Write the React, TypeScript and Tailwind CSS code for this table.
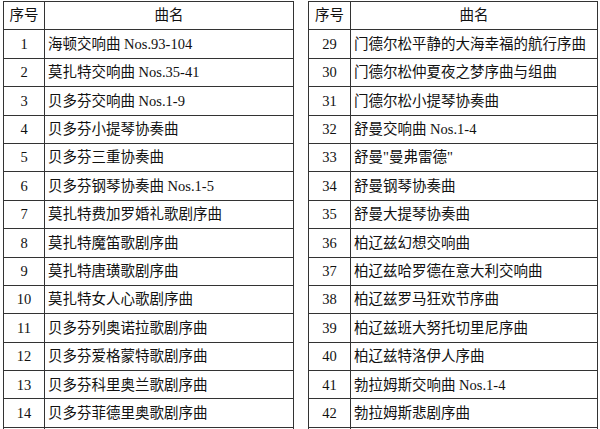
const left: [string, string][] = [
  ['1', '海顿交响曲 Nos.93-104'],
  ['2', '莫扎特交响曲 Nos.35-41'],
  ['3', '贝多芬交响曲 Nos.1-9'],
  ['4', '贝多芬小提琴协奏曲'],
  ['5', '贝多芬三重协奏曲'],
  ['6', '贝多芬钢琴协奏曲 Nos.1-5'],
  ['7', '莫扎特费加罗婚礼歌剧序曲'],
  ['8', '莫扎特魔笛歌剧序曲'],
  ['9', '莫扎特唐璜歌剧序曲'],
  ['10', '莫扎特女人心歌剧序曲'],
  ['11', '贝多芬列奥诺拉歌剧序曲'],
  ['12', '贝多芬爱格蒙特歌剧序曲'],
  ['13', '贝多芬科里奥兰歌剧序曲'],
  ['14', '贝多芬菲德里奥歌剧序曲'],
]

const right: [string, string][] = [
  ['29', '门德尔松平静的大海幸福的航行序曲'],
  ['30', '门德尔松仲夏夜之梦序曲与组曲'],
  ['31', '门德尔松小提琴协奏曲'],
  ['32', '舒曼交响曲 Nos.1-4'],
  ['33', '舒曼"曼弗雷德"'],
  ['34', '舒曼钢琴协奏曲'],
  ['35', '舒曼大提琴协奏曲'],
  ['36', '柏辽兹幻想交响曲'],
  ['37', '柏辽兹哈罗德在意大利交响曲'],
  ['38', '柏辽兹罗马狂欢节序曲'],
  ['39', '柏辽兹班大努托切里尼序曲'],
  ['40', '柏辽兹特洛伊人序曲'],
  ['41', '勃拉姆斯交响曲 Nos.1-4'],
  ['42', '勃拉姆斯悲剧序曲'],
]

function PieceTable({ rows, numWidth, width }: { rows: [string, string][]; numWidth: string; width: string }) {
  return (
    <table className={`table-fixed border-collapse ${width}`}>
      <colgroup>
        <col className={numWidth} />
        <col />
      </colgroup>
      <thead>
        <tr className="h-[28.4px]">
          <th className="border border-[#333] font-normal text-center p-0">序号</th>
          <th className="border border-[#333] font-normal text-center p-0">曲名</th>
        </tr>
      </thead>
      <tbody>
        {rows.map(([no, name]) => (
          <tr key={no} className="h-[28.4px]">
            <td className="border border-[#333] text-center p-0">{no}</td>
            <td className="border border-[#333] text-left pl-[3px] pr-0 py-0 whitespace-nowrap">{name}</td>
          </tr>
        ))}
        {/* next row continues past the bottom edge of the page */}
        <tr className="h-[28.4px]">
          <td className="border border-[#333] p-0" />
          <td className="border border-[#333] p-0" />
        </tr>
      </tbody>
    </table>
  )
}

export default function App() {
  return (
    <div
      className="w-[600px] h-[429px] overflow-hidden bg-white text-[#111] text-[14.5px] leading-none"
      style={{ fontFamily: '"Liberation Serif", "Noto Sans CJK SC", serif' }}
    >
      <div className="flex items-start gap-[14px] pl-[3px] pt-[1px]">
        <PieceTable rows={left} numWidth="w-[41px]" width="w-[291px]" />
        <PieceTable rows={right} numWidth="w-[42px]" width="w-[290px]" />
      </div>
    </div>
  )
}
